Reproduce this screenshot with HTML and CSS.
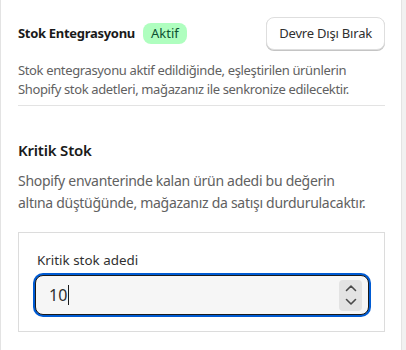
FILE: index.html
```html
<!DOCTYPE html>
<html lang="tr">
<head>
<meta charset="utf-8">
<link rel="stylesheet" href="styles.css">
</head>
<body>
<div class="card">
  <section class="top">
    <div class="top-row">
      <div class="title-wrap">
        <h2 class="title">Stok Entegrasyonu</h2>
        <span class="badge">Aktif</span>
      </div>
      <button class="btn" type="button">Devre Dışı Bırak</button>
    </div>
    <p class="desc">Stok entegrasyonu aktif edildiğinde, eşleştirilen ürünlerin Shopify stok adetleri, mağazanız ile senkronize edilecektir.</p>
  </section>
  <hr class="divider">
  <section class="critical">
    <h3 class="heading">Kritik Stok</h3>
    <p class="desc2">Shopify envanterinde kalan ürün adedi bu değerin altına düştüğünde, mağazanız da satışı durdurulacaktır.</p>
    <div class="field-box">
      <label class="label">Kritik stok adedi</label>
      <div class="input">
        <span class="value">10</span><span class="caret"></span>
        <span class="spinner">
          <svg width="14" height="26" viewBox="0 0 14 26" fill="none" stroke="#4a4a4a" stroke-width="1.6" stroke-linecap="round" stroke-linejoin="round">
            <path d="M2.5 8.5 L7 4 L11.5 8.5"/>
            <path d="M2.5 17.5 L7 22 L11.5 17.5"/>
          </svg>
        </span>
      </div>
    </div>
  </section>
</div>
</body>
</html>
```
FILE: styles.css
```css
* { box-sizing: border-box; }
html, body { margin: 0; padding: 0; }
body {
  background: #f1f1f1;
  font-family: "Noto Sans", "Open Sans", sans-serif;
  color: #303030;
  height: 350px;
  overflow: hidden;
}
.card {
  width: 402px;
  min-height: 350px;
  background: #fff;
  border-left: 1px solid #e3e3e3;
  border-right: 1px solid #e3e3e3;
  padding: 16px 16px 0 17px;
}
.top-row {
  display: flex;
  align-items: center;
  justify-content: space-between;
  height: 34px;
}
.title-wrap {
  display: flex;
  align-items: center;
  gap: 8px;
}
.title {
  margin: 0;
  font-size: 13px;
  font-weight: 700;
  letter-spacing: -0.3px;
  color: #1a1a1a;
}
.badge {
  background: #affebf;
  color: #0c5132;
  font-size: 13px;
  line-height: 21px;
  height: 21px;
  padding: 0 8px;
  border-radius: 8px;
}
.btn {
  font-family: inherit;
  font-size: 13px;
  letter-spacing: -0.2px;
  color: #303030;
  background: #fff;
  border: 1px solid #dedede;
  border-radius: 8px;
  box-shadow: 0 1px 0 #c4c4c4;
  height: 33px;
  padding: 0 12px;
}
.desc {
  margin: 11px 0 0;
  font-size: 13px;
  line-height: 19px;
  letter-spacing: -0.36px;
  color: #616161;
}
.divider {
  margin: 6px 0 0;
  border: 0;
  border-top: 1px solid #e3e3e3;
  height: 0;
}
.critical {
  padding-top: 34px;
}
.heading {
  margin: 0;
  font-size: 15px;
  line-height: 20px;
  font-weight: 600;
  letter-spacing: -0.2px;
  color: #1a1a1a;
}
.desc2 {
  margin: 10px 0 0;
  font-size: 14px;
  line-height: 21.5px;
  letter-spacing: -0.29px;
  color: #616161;
  max-width: 350px;
}
.field-box {
  margin-top: 19px;
  border: 1px solid #dcdcdc;
  padding: 17px 15px 16px 16px;
}
.label {
  display: block;
  font-size: 13.4px;
  line-height: 20px;
  margin-left: 2px;
  color: #303030;
}
.input {
  margin-top: 5px;
  height: 40px;
  border: 1px solid #1a1a1a;
  border-radius: 8px;
  background: #f6f6f6;
  box-shadow: 0 0 0 2px #005bd3;
  display: flex;
  align-items: center;
  padding: 0 6px 0 13px;
}
.value {
  font-size: 16px;
  color: #303030;
}
.caret {
  width: 1px;
  height: 20px;
  background: #1a1a1a;
  margin-left: 1px;
}
.spinner {
  margin-left: auto;
  width: 23px;
  height: 31px;
  background: #e3e3e3;
  border-radius: 4px;
  display: flex;
  align-items: center;
  justify-content: center;
}
```
